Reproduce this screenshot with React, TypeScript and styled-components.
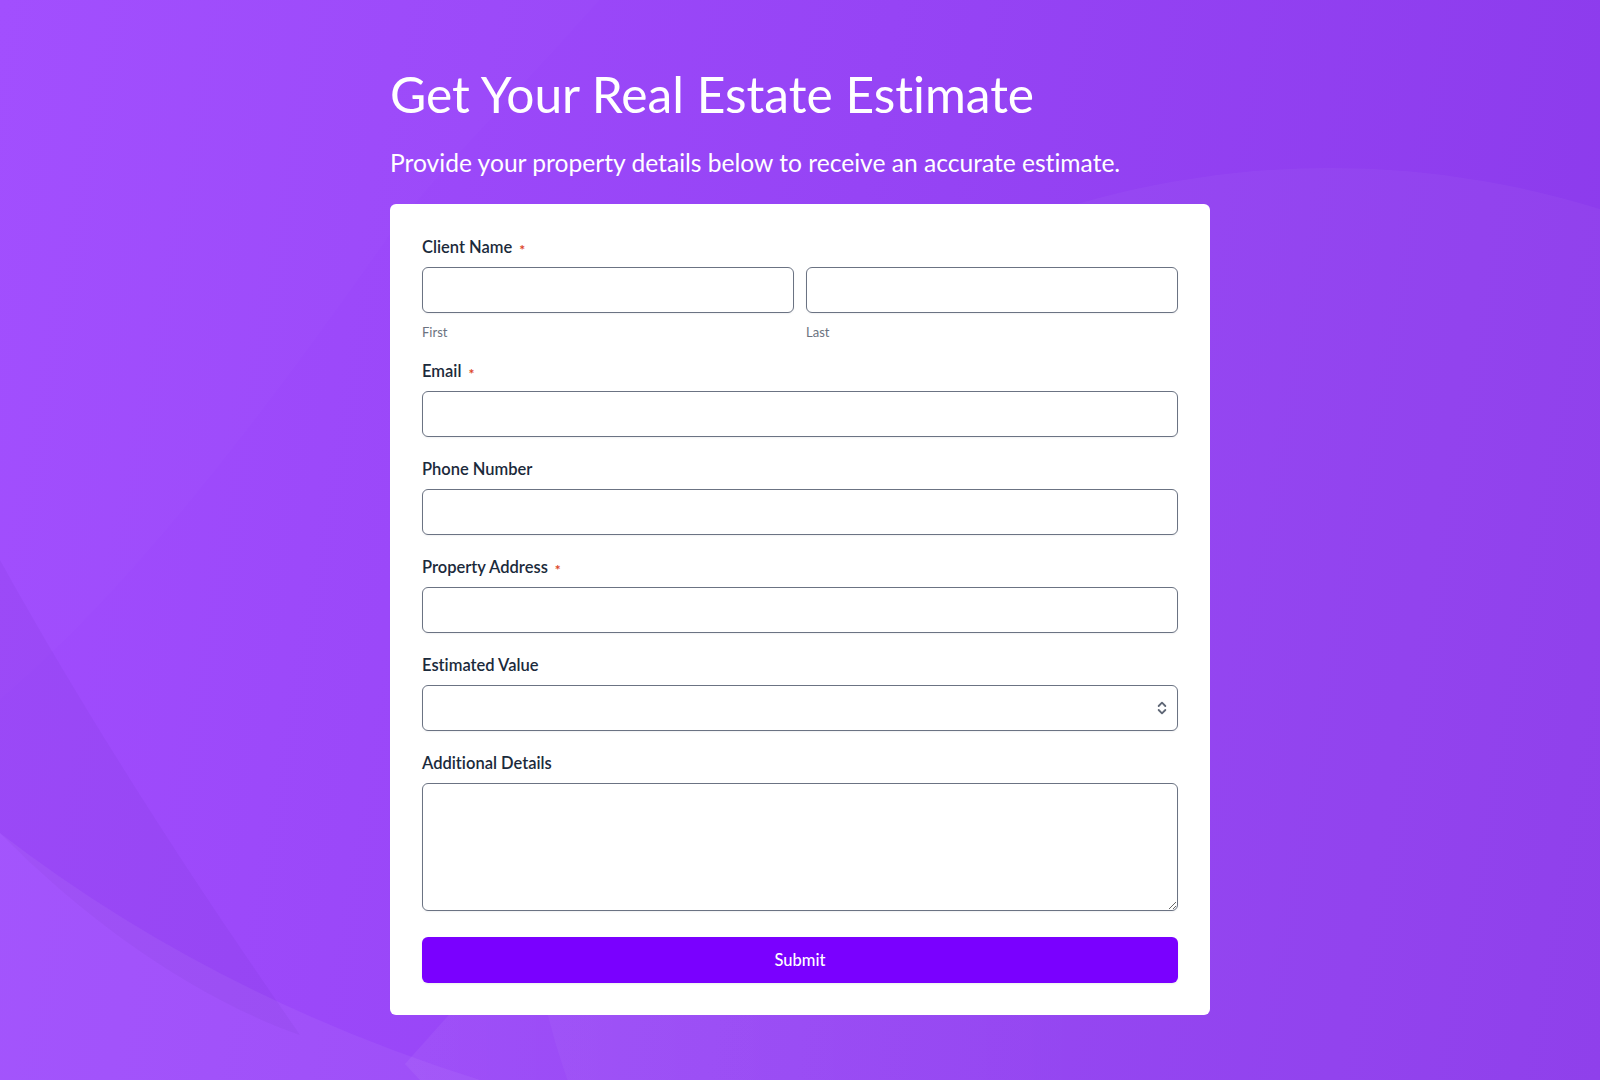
import React from 'react';
import styled, { createGlobalStyle } from 'styled-components';
import { ChevronsUpDown } from 'lucide-react';

const GlobalStyle = createGlobalStyle`
  * {
    box-sizing: border-box;
  }
  body {
    margin: 0;
    font-family: 'Lato', 'Liberation Sans', sans-serif;
    font-variant-ligatures: none;
  }
`;

const Page = styled.div`
  position: relative;
  min-height: 1080px;
  overflow: hidden;
  background: linear-gradient(100deg, #a14dfe 0%, #9644f5 50%, #8b3aeb 100%);
`;

const Backdrop = styled.svg`
  position: absolute;
  inset: 0;
  width: 100%;
  height: 100%;
  pointer-events: none;
`;

const Column = styled.main`
  position: relative;
  width: 820px;
  margin: 0 auto;
  padding-top: 65px;
`;

const Title = styled.h1`
  margin: 0 0 23px;
  font-size: 49.7px;
  line-height: 1.2;
  font-weight: 400;
  color: #ffffff;
`;

const Intro = styled.p`
  margin: 0 0 27px;
  font-size: 24.6px;
  line-height: 1.2;
  font-weight: 400;
  color: #ffffff;
`;

const Card = styled.form`
  display: flex;
  flex-direction: column;
  padding: 33px 32px 32px;
  background: #ffffff;
  border-radius: 6px;
`;

const Field = styled.div<{ $gap?: number }>`
  display: flex;
  flex-direction: column;
  margin-bottom: ${({ $gap }) => ($gap ?? 22)}px;
`;

const Label = styled.label`
  display: flex;
  align-items: center;
  gap: 7px;
  height: 19px;
  margin-bottom: 11px;
  font-size: 16.5px;
  font-weight: 600;
  color: #1b2a3b;
`;

const Required = styled.span`
  display: inline-block;
  padding-top: 6px;
  font-size: 14px;
  line-height: 1;
  font-weight: 700;
  color: #dc4528;
`;

const NameRow = styled.div`
  display: grid;
  grid-template-columns: 1fr 1fr;
  column-gap: 12px;
`;

const SubLabel = styled.span`
  display: block;
  margin-top: 9px;
  font-size: 13px;
  line-height: 20px;
  color: #6b7280;
`;

const inputBox = `
  display: block;
  width: 100%;
  border: 1px solid #6b7383;
  border-radius: 6px;
  background: #ffffff;
  box-shadow: 0 1px 2px rgba(17, 24, 39, 0.06);
  font-family: inherit;
  font-size: 16px;
  color: #1b2a3b;
  outline: none;
`;

const TextInput = styled.input`
  ${inputBox}
  height: 46px;
  padding: 0 12px;
`;

const SelectWrap = styled.div`
  position: relative;
`;

const Select = styled.select`
  ${inputBox}
  height: 46px;
  padding: 0 40px 0 12px;
  appearance: none;
`;

const SelectIcon = styled.span`
  position: absolute;
  top: 50%;
  right: 8px;
  display: flex;
  transform: translateY(-50%);
  color: #5f6776;
  pointer-events: none;
`;

const TextArea = styled.textarea`
  ${inputBox}
  height: 128px;
  padding: 10px 12px;
  resize: vertical;
`;

const SubmitButton = styled.button`
  height: 46px;
  margin-top: 4px;
  border: none;
  border-radius: 6px;
  background: #7a00ff;
  box-shadow: 0 1px 2px rgba(17, 24, 39, 0.08);
  font-family: inherit;
  font-size: 16.5px;
  font-weight: 500;
  color: #ffffff;
  cursor: pointer;
`;

const App: React.FC = () => {
  return (
    <Page>
      <GlobalStyle />
      <Backdrop viewBox="0 0 1600 1080" preserveAspectRatio="none">
        <defs>
          <linearGradient id="floorGlow" x1="0" y1="0" x2="1" y2="0">
            <stop offset="0" stopColor="#ffffff" stopOpacity="0.05" />
            <stop offset="1" stopColor="#ffffff" stopOpacity="0" />
          </linearGradient>
        </defs>
        <path d="M0,0 L600,0 C520,90 440,170 390,235 C260,420 130,590 0,700 Z" fill="#ffffff" opacity="0.012" />
        <ellipse cx="1330" cy="868" rx="800" ry="700" fill="#ffffff" opacity="0.035" />
        <path d="M0,560 C100,740 200,890 300,1035 C200,1000 90,925 0,833 Z" fill="#2a0060" opacity="0.04" />
        <path d="M0,833 Q210,995 480,1080 L0,1080 Z" fill="#ffffff" opacity="0.05" />
        <path d="M455,1008 L405,1064 L420,1080 L1100,1080 L1100,1008 Z" fill="url(#floorGlow)" />
      </Backdrop>

      <Column>
        <Title>Get Your Real Estate Estimate</Title>
        <Intro>Provide your property details below to receive an accurate estimate.</Intro>

        <Card onSubmit={(e) => e.preventDefault()}>
          <Field $gap={19}>
            <Label>
              Client Name <Required>*</Required>
            </Label>
            <NameRow>
              <div>
                <TextInput type="text" />
                <SubLabel>First</SubLabel>
              </div>
              <div>
                <TextInput type="text" />
                <SubLabel>Last</SubLabel>
              </div>
            </NameRow>
          </Field>

          <Field>
            <Label>
              Email <Required>*</Required>
            </Label>
            <TextInput type="email" />
          </Field>

          <Field>
            <Label>Phone Number</Label>
            <TextInput type="tel" />
          </Field>

          <Field>
            <Label>
              Property Address <Required>*</Required>
            </Label>
            <TextInput type="text" />
          </Field>

          <Field>
            <Label>Estimated Value</Label>
            <SelectWrap>
              <Select defaultValue="">
                <option value="" />
                <option value="1">Under $250,000</option>
                <option value="2">$250,000 - $500,000</option>
                <option value="3">$500,000 - $1,000,000</option>
                <option value="4">Over $1,000,000</option>
              </Select>
              <SelectIcon>
                <ChevronsUpDown size={16} strokeWidth={2.75} />
              </SelectIcon>
            </SelectWrap>
          </Field>

          <Field>
            <Label>Additional Details</Label>
            <TextArea />
          </Field>

          <SubmitButton type="submit">Submit</SubmitButton>
        </Card>
      </Column>
    </Page>
  );
};

export default App;
